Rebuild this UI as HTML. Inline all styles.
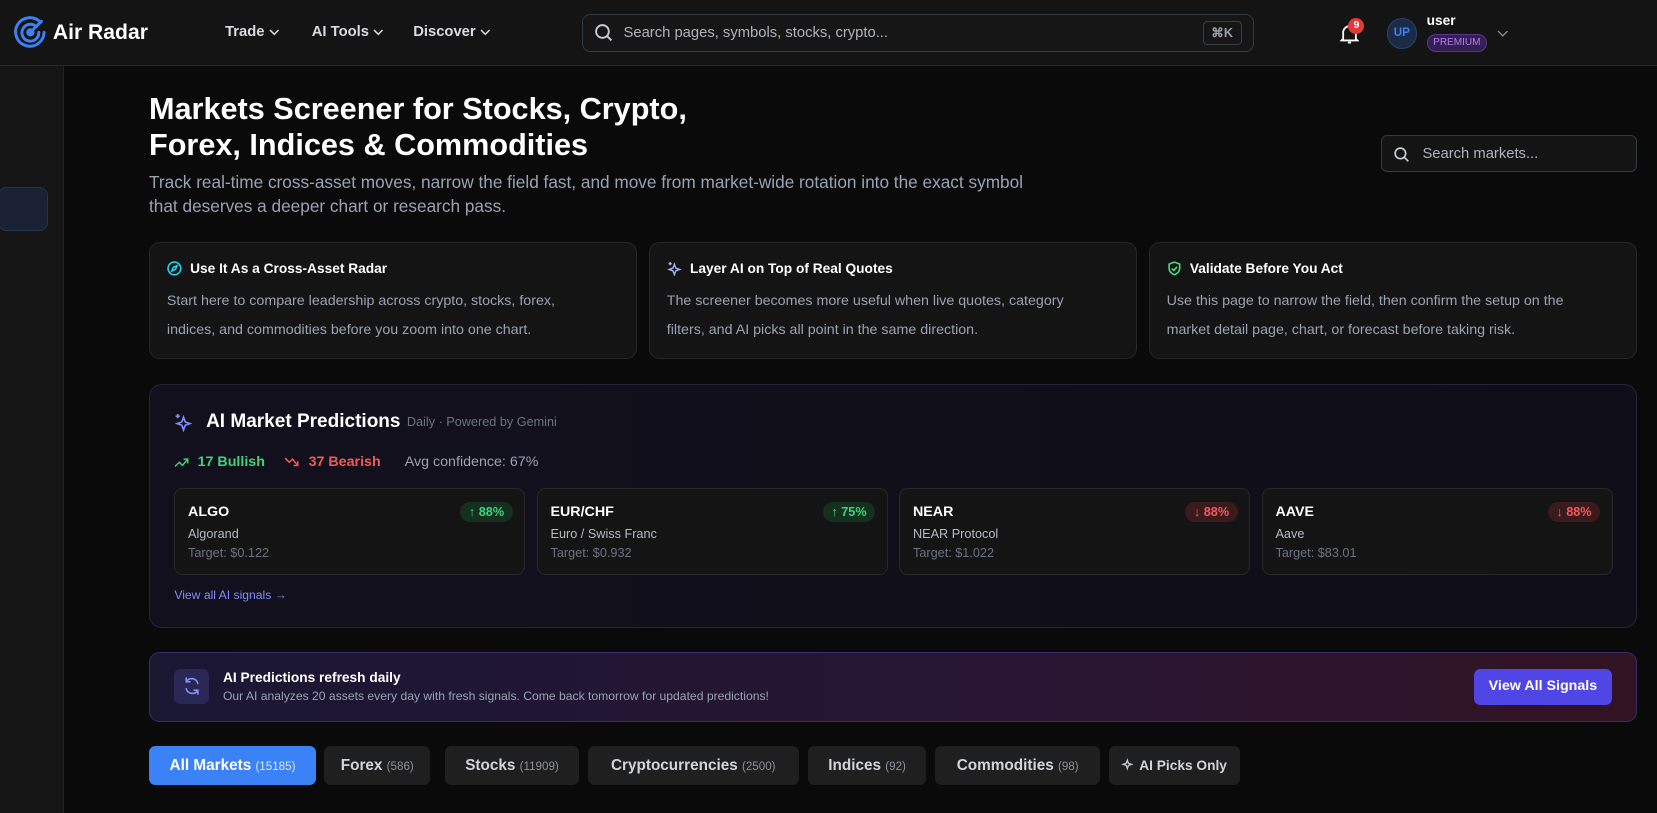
<!DOCTYPE html>
<html><head><meta charset="utf-8"><style>
*{box-sizing:border-box;margin:0;padding:0}
html,body{width:1657px;height:813px;overflow:hidden;background:#0a0a0a}
#w{zoom:1.0568;width:1568px;height:770px;position:relative;font-family:"Liberation Sans",sans-serif;color:#fff;background:#0a0a0a}
.a{position:absolute}
.hdr{left:0;top:0;width:1568px;height:62px;background:#141414;border-bottom:1px solid #262626}
.side{left:0;top:62px;width:61px;height:708px;background:#151515;border-right:1px solid #222}
.nav{top:23px;font-size:14px;color:#d8dbe2;font-weight:600}
.nav svg{vertical-align:middle;margin-left:4px}
.card{background:#141414;border:1px solid #262626;border-radius:10px}
.ct{font-size:13px;font-weight:700;color:#fff;position:absolute;left:16px;top:17px;display:flex;align-items:center;gap:8px}
.cp{position:absolute;left:16px;top:42px;font-size:13.5px;line-height:27px;color:#9aa3b2;width:440px}
.pc{background:#141414;border:1px solid #282828;border-radius:8px;top:462px;height:82px;width:332px}
.pc b{position:absolute;left:12px;top:14px;font-size:13.5px}
.pc .n{position:absolute;left:12px;top:36px;font-size:12px;color:#b4bac5}
.pc .t{position:absolute;left:12px;top:54px;font-size:12px;color:#6b7280}
.bd{position:absolute;right:11px;top:12px;height:19px;padding:0 8px;border-radius:10px;font-size:12px;font-weight:700;line-height:19px}
.up{background:#14301f;color:#3fd47a}.dn{background:#3a1a1c;color:#f25a5a}
.tab{top:706px;height:37px;border-radius:6px;background:#1f1f1f;color:#d0d4db;font-size:14.5px;font-weight:600;line-height:37px;text-align:center}
.tab small{font-size:11px;color:#8b919c;margin-left:4px;font-weight:400}
</style></head><body><div id="w">
<div class="a hdr"></div>
<svg class="a" style="left:13px;top:15px" width="31" height="31" viewBox="0 0 31 31" fill="none" stroke="#3b82f6" stroke-width="2.8" stroke-linecap="round"><path d="M25 6A13.5 13.5 0 1 0 28.5 15.5"/><path d="M21 10A8 8 0 1 0 23.5 15.5"/><circle cx="15.5" cy="15.5" r="2.5" fill="#3b82f6"/><path d="M15.5 15.5L26 5"/></svg>
<div class="a" style="left:50px;top:20px;font-size:20px;font-weight:700">Air Radar</div>
<div class="a nav" style="left:213px">Trade<svg width="10" height="6"><path d="M1 1l4 4 4-4" stroke="#d8dbe2" fill="none" stroke-width="1.4"/></svg></div>
<div class="a nav" style="left:295px">AI Tools<svg width="10" height="6"><path d="M1 1l4 4 4-4" stroke="#d8dbe2" fill="none" stroke-width="1.4"/></svg></div>
<div class="a nav" style="left:391px">Discover<svg width="10" height="6"><path d="M1 1l4 4 4-4" stroke="#d8dbe2" fill="none" stroke-width="1.4"/></svg></div>
<div class="a" style="left:551px;top:13px;width:636px;height:36px;border:1px solid #333a45;border-radius:8px;background:#161616"></div>
<svg class="a" style="left:562px;top:22px" width="18" height="18" fill="none" stroke="#c7cbd3" stroke-width="1.8"><circle cx="8" cy="8" r="6"/><path d="M12.5 12.5l4 4"/></svg>
<div class="a" style="left:590px;top:24px;font-size:14px;color:#aeb3bd">Search pages, symbols, stocks, crypto...</div>
<div class="a" style="left:1138px;top:20px;width:37px;height:23px;border:1px solid #3a3f48;border-radius:4px;font-size:12px;color:#9aa0aa;text-align:center;line-height:21px;font-weight:700">⌘K</div>
<svg class="a" style="left:1268px;top:22px" width="18" height="20" fill="none" stroke="#fff" stroke-width="1.7"><path d="M3 15V9a6 6 0 0 1 12 0v6l1.5 1.5h-15z"/><path d="M7.5 18.5h3"/></svg>
<div class="a" style="left:1276px;top:17px;width:15px;height:15px;border-radius:50%;background:#e53935;font-size:10px;font-weight:700;text-align:center;line-height:15px">9</div>
<div class="a" style="left:1312px;top:17px;width:29px;height:29px;border-radius:50%;background:#1c2a45;border:1px solid #2a4070;color:#3b82f6;font-size:11px;font-weight:700;text-align:center;line-height:27px">UP</div>
<div class="a" style="left:1350px;top:12px;font-size:13px;font-weight:700">user</div>
<div class="a" style="left:1350px;top:32px;width:57px;height:17px;border-radius:9px;background:#341e52;border:1px solid #5a3590;color:#b47ef5;font-size:9.5px;text-align:center;line-height:15px">PREMIUM</div>
<svg class="a" style="left:1417px;top:28px" width="11" height="7"><path d="M1 1l4.5 4.5L10 1" stroke="#8a8f99" fill="none" stroke-width="1.3"/></svg>
<div class="a side"></div>
<div class="a" style="left:-2px;top:177px;width:47px;height:42px;border:1px solid #233352;border-radius:8px;background:#1a2132"></div>

<div class="a" style="left:141px;top:87px;font-size:29px;font-weight:700;line-height:34px;width:620px">Markets Screener for Stocks, Crypto,<br>Forex, Indices &amp; Commodities</div>
<div class="a" style="left:141px;top:161px;font-size:16.3px;line-height:23px;color:#9aa3b2;width:880px">Track real-time cross-asset moves, narrow the field fast, and move from market-wide rotation into the exact symbol<br>that deserves a deeper chart or research pass.</div>
<div class="a" style="left:1307px;top:128px;width:242px;height:35px;border:1px solid #333a45;border-radius:6px;background:#141414"></div>
<svg class="a" style="left:1318px;top:138px" width="16" height="16" fill="none" stroke="#c7cbd3" stroke-width="1.6"><circle cx="7" cy="7" r="5"/><path d="M11 11l3.5 3.5"/></svg>
<div class="a" style="left:1346px;top:138px;font-size:14px;color:#aeb3bd">Search markets...</div>

<div class="a card" style="left:141px;top:229px;width:462px;height:111px"><div class="ct"><svg width="14" height="14" fill="none" stroke="#22d3ee" stroke-width="1.5"><circle cx="7" cy="7" r="6"/><path d="M9.5 4.5L8 8 4.5 9.5 6 6z"/></svg>Use It As a Cross-Asset Radar</div><div class="cp">Start here to compare leadership across crypto, stocks, forex,<br>indices, and commodities before you zoom into one chart.</div></div>
<div class="a card" style="left:614px;top:229px;width:462px;height:111px"><div class="ct"><svg width="14" height="14" fill="none" stroke="#a5b4fc" stroke-width="1.3"><path d="M7 3l1.3 3.7L12 8l-3.7 1.3L7 13l-1.3-3.7L2 8l3.7-1.3z"/><path d="M3 1v3M1.5 2.5h3"/></svg>Layer AI on Top of Real Quotes</div><div class="cp">The screener becomes more useful when live quotes, category<br>filters, and AI picks all point in the same direction.</div></div>
<div class="a card" style="left:1087px;top:229px;width:462px;height:111px"><div class="ct"><svg width="14" height="14" fill="none" stroke="#4ade80" stroke-width="1.5"><path d="M7 1l5 2v4c0 3-2.5 5-5 6-2.5-1-5-3-5-6V3z"/><path d="M4.5 7l2 2 3-3.5"/></svg>Validate Before You Act</div><div class="cp">Use this page to narrow the field, then confirm the setup on the<br>market detail page, chart, or forecast before taking risk.</div></div>

<div class="a" style="left:141px;top:363px;width:1408px;height:231px;border:1px solid #26233f;border-radius:12px;background:linear-gradient(90deg,#12101d,#0f0e17)"></div>
<svg class="a" style="left:165px;top:391px" width="18" height="18" fill="none" stroke="#818cf8" stroke-width="1.6"><path d="M9 4l1.6 4.4L15 10l-4.4 1.6L9 16l-1.6-4.4L3 10l4.4-1.6z"/><path d="M3.5 1v4M1.5 3h4"/></svg>
<div class="a" style="left:195px;top:389px;font-size:18px;font-weight:700">AI Market Predictions</div>
<div class="a" style="left:385px;top:393px;font-size:12px;color:#6b7280">Daily · Powered by Gemini</div>
<svg class="a" style="left:165px;top:432px" width="14" height="10" fill="none" stroke="#3fd47a" stroke-width="1.4"><path d="M1 9l4-4 3 3 5-6M9 2h4v4"/></svg>
<div class="a" style="left:187px;top:430px;font-size:13.5px;font-weight:700;color:#3fd47a">17 Bullish</div>
<svg class="a" style="left:269px;top:432px" width="14" height="10" fill="none" stroke="#f25a5a" stroke-width="1.4"><path d="M1 1l4 4 3-3 5 6M9 8h4V4"/></svg>
<div class="a" style="left:292px;top:430px;font-size:13.5px;font-weight:700;color:#f25a5a">37 Bearish</div>
<div class="a" style="left:383px;top:430px;font-size:13.5px;color:#9aa3b2">Avg confidence: 67%</div>
<div class="a pc" style="left:165px"><b>ALGO</b><span class="bd up">↑ 88%</span><div class="n">Algorand</div><div class="t">Target: $0.122</div></div>
<div class="a pc" style="left:508px"><b>EUR/CHF</b><span class="bd up">↑ 75%</span><div class="n">Euro / Swiss Franc</div><div class="t">Target: $0.932</div></div>
<div class="a pc" style="left:851px"><b>NEAR</b><span class="bd dn">↓ 88%</span><div class="n">NEAR Protocol</div><div class="t">Target: $1.022</div></div>
<div class="a pc" style="left:1194px"><b>AAVE</b><span class="bd dn">↓ 88%</span><div class="n">Aave</div><div class="t">Target: $83.01</div></div>
<div class="a" style="left:165px;top:556px;font-size:11.5px;color:#818cf8">View all AI signals →</div>

<div class="a" style="left:141px;top:617px;width:1408px;height:66px;border:1px solid #372c66;border-radius:10px;background:linear-gradient(90deg,#1a1733,#281533 60%,#321323)"></div>
<div class="a" style="left:165px;top:633px;width:33px;height:33px;border-radius:6px;background:#2a2754"></div>
<svg class="a" style="left:172px;top:640px" width="19" height="19" fill="none" stroke="#818cf8" stroke-width="1.6" stroke-linecap="round"><path d="M15 7a6 6 0 0 0-11-1.5M4 2v3.5h3.5"/><path d="M4 12a6 6 0 0 0 11 1.5M15 17v-3.5h-3.5"/></svg>
<div class="a" style="left:211px;top:634px;font-size:13px;font-weight:700">AI Predictions refresh daily</div>
<div class="a" style="left:211px;top:652px;font-size:11.5px;color:#9aa3b2">Our AI analyzes 20 assets every day with fresh signals. Come back tomorrow for updated predictions!</div>
<div class="a" style="left:1395px;top:633px;width:130px;height:34px;border-radius:6px;background:#4f46e5;font-size:13.5px;font-weight:700;text-align:center;line-height:34px">View All Signals</div>

<div class="a tab" style="left:141px;width:158px;background:#3b82f6;color:#fff">All Markets<small style="color:#dbe7ff">(15185)</small></div>
<div class="a tab" style="left:307px;width:100px">Forex<small>(586)</small></div>
<div class="a tab" style="left:421px;width:127px">Stocks<small>(11909)</small></div>
<div class="a tab" style="left:556px;width:200px">Cryptocurrencies<small>(2500)</small></div>
<div class="a tab" style="left:765px;width:111px">Indices<small>(92)</small></div>
<div class="a tab" style="left:885px;width:156px">Commodities<small>(98)</small></div>
<div class="a tab" style="left:1049px;width:124px;font-size:13px"><svg width="12" height="12" fill="none" stroke="#c7cbd3" stroke-width="1.2" style="vertical-align:-1px;margin-right:5px"><path d="M6 2l1 3 3 1-3 1-1 3-1-3-3-1 3-1z"/></svg>AI Picks Only</div>
</div></body></html>
